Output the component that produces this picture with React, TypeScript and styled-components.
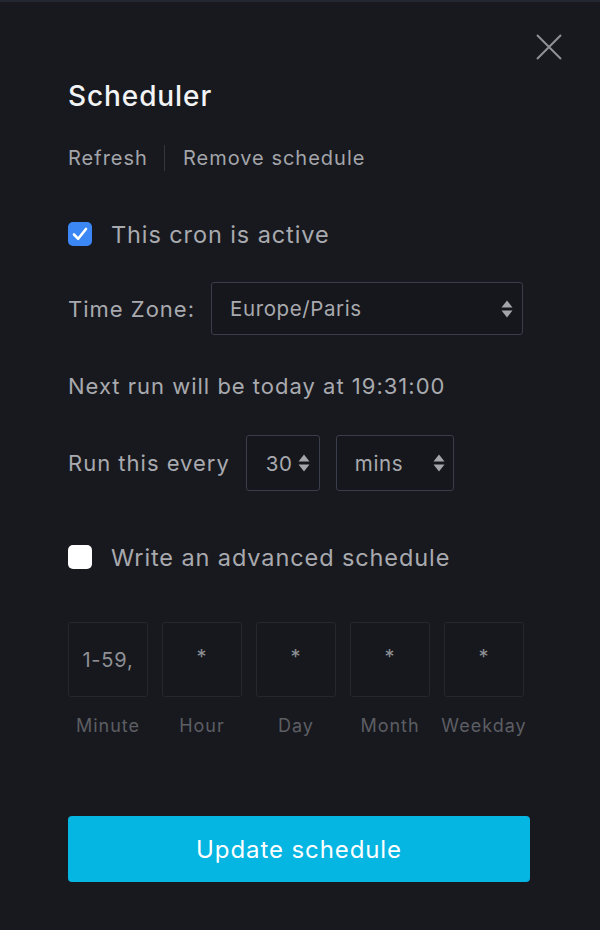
import React from "react";
import styled, { createGlobalStyle } from "styled-components";

const Global = createGlobalStyle`
  html, body { margin: 0; padding: 0; background: #18191e; }
  body { font-family: Inter, "Noto Sans", "Liberation Sans", sans-serif; -webkit-font-smoothing: antialiased; }
  * { box-sizing: border-box; }
`;

const Panel = styled.div`
  width: 600px;
  min-height: 930px;
  background: #18191e;
  border-top: 2px solid #23272f;
  padding: 0 68px;
  position: relative;
  display: flex;
  flex-direction: column;
`;

const Close = styled.button`
  position: absolute;
  top: 31px;
  right: 37px;
  width: 28px;
  height: 28px;
  padding: 0;
  border: 0;
  background: none;
  display: flex;
  align-items: center;
  justify-content: center;
`;

const Title = styled.h1`
  margin: 76px 0 0;
  font-size: 28px;
  line-height: 36px;
  font-weight: 500;
  letter-spacing: 0.9px;
  color: #f2f3f5;
`;

const Links = styled.div`
  display: flex;
  align-items: center;
  margin-top: 30px;
  height: 28px;
`;

const LinkText = styled.span`
  font-size: 20px;
  letter-spacing: 1px;
  color: #a3a5aa;
`;

const Sep = styled.span`
  width: 1px;
  height: 26px;
  background: #34363c;
  margin: 0 18px 0 16px;
`;

const CheckRow = styled.label<{ $mt: number }>`
  display: flex;
  align-items: center;
  gap: 19px;
  margin-top: ${(p) => p.$mt}px;
  height: 30px;
`;

const Box = styled.span<{ $on: boolean }>`
  width: 24px;
  height: 24px;
  border-radius: 5px;
  background: ${(p) => (p.$on ? "#3b87f5" : "#ffffff")};
  display: flex;
  align-items: center;
  justify-content: center;
  flex: none;
`;

const BigText = styled.span`
  font-size: 23.5px;
  letter-spacing: 0.9px;
  color: #a8aaaf;
`;

const Row = styled.div<{ $mt: number }>`
  display: flex;
  align-items: center;
  margin-top: ${(p) => p.$mt}px;
`;

const Label = styled.span`
  font-size: 22px;
  letter-spacing: 1px;
  color: #a8aaaf;
`;

const Select = styled.div<{ $w: number; $h: number; $pl: number; $pr: number; $ml: number }>`
  width: ${(p) => p.$w}px;
  height: ${(p) => p.$h}px;
  margin-left: ${(p) => p.$ml}px;
  padding-left: ${(p) => p.$pl}px;
  padding-right: ${(p) => p.$pr}px;
  border: 1.5px solid #3a3e4b;
  border-radius: 3px;
  background: #16171c;
  display: flex;
  align-items: center;
  justify-content: space-between;
  gap: 4px;
  font-size: 20.5px;
  letter-spacing: 0.6px;
  color: #a8aaaf;
`;

const NextRun = styled.div`
  margin-top: 37px;
  font-size: 22px;
  letter-spacing: 1px;
  color: #a8aaaf;
  line-height: 28px;
`;

const Grid = styled.div`
  display: grid;
  grid-template-columns: repeat(5, 80px);
  column-gap: 14px;
  margin-top: 50px;
`;

const Field = styled.div`
  display: flex;
  flex-direction: column;
  align-items: center;
`;

const Cell = styled.div`
  width: 80px;
  height: 75px;
  border: 1.5px solid #25272e;
  border-radius: 3px;
  background: #16181e;
  display: flex;
  align-items: center;
  justify-content: center;
  padding: 0 10px;
  color: #8e9095;
  font-size: 20px;
  letter-spacing: 0.8px;
  white-space: nowrap;
`;

const Star = styled.span`
  margin-top: -5px;
  font-size: 20px;
`;

const CellLabel = styled.span`
  margin-top: 18px;
  font-size: 18px;
  letter-spacing: 1px;
  color: #5c5e64;
  white-space: nowrap;
`;

const Button = styled.button`
  margin-top: 80px;
  width: 462px;
  height: 66px;
  border: 0;
  border-radius: 4px;
  background: #05b5e2;
  color: #ffffff;
  font-family: inherit;
  font-size: 24px;
  letter-spacing: 0.9px;
`;

const Arrows = () => (
  <svg width="12" height="20" viewBox="0 0 12 20" style={{ flex: "none" }}>
    <path d="M6 1.5 L11.5 8.5 L0.5 8.5 Z" fill="#a3a5aa" />
    <path d="M6 18.5 L11.5 11.5 L0.5 11.5 Z" fill="#a3a5aa" />
  </svg>
);

const Check = () => (
  <svg width="16" height="14" viewBox="0 0 16 14">
    <path d="M2 7.5 L6.2 11.8 L14 2" fill="none" stroke="#fff" strokeWidth="2.6" strokeLinecap="round" strokeLinejoin="round" />
  </svg>
);

const fields = [
  { v: "1-59,", l: "Minute" },
  { v: "*", l: "Hour" },
  { v: "*", l: "Day" },
  { v: "*", l: "Month" },
  { v: "*", l: "Weekday" },
];

export default function App() {
  return (
    <>
      <Global />
      <Panel>
        <Close aria-label="Close">
          <svg width="28" height="28" viewBox="0 0 28 28">
            <path d="M2 2 L26 26 M26 2 L2 26" stroke="#8f9196" strokeWidth="2" />
          </svg>
        </Close>
        <Title>Scheduler</Title>
        <Links>
          <LinkText>Refresh</LinkText>
          <Sep />
          <LinkText>Remove schedule</LinkText>
        </Links>
        <CheckRow $mt={47}>
          <Box $on>
            <Check />
          </Box>
          <BigText>This cron is active</BigText>
        </CheckRow>
        <Row $mt={33}>
          <Label>Time Zone:</Label>
          <Select $w={312} $h={53} $pl={18} $pr={9} $ml={16}>
            <span>Europe/Paris</span>
            <Arrows />
          </Select>
        </Row>
        <NextRun>Next run will be today at 19:31:00</NextRun>
        <Row $mt={35}>
          <Label>Run this every</Label>
          <Select $w={74} $h={56} $pl={19} $pr={9} $ml={16}>
            <span>30</span>
            <Arrows />
          </Select>
          <Select $w={118} $h={56} $pl={18} $pr={8} $ml={16}>
            <span>mins</span>
            <Arrows />
          </Select>
        </Row>
        <CheckRow $mt={51}>
          <Box $on={false} />
          <BigText>Write an advanced schedule</BigText>
        </CheckRow>
        <Grid>
          {fields.map((f) => (
            <Field key={f.l}>
              <Cell>{f.v === "*" ? <Star>*</Star> : f.v}</Cell>
              <CellLabel>{f.l}</CellLabel>
            </Field>
          ))}
        </Grid>
        <Button>Update schedule</Button>
      </Panel>
    </>
  );
}
